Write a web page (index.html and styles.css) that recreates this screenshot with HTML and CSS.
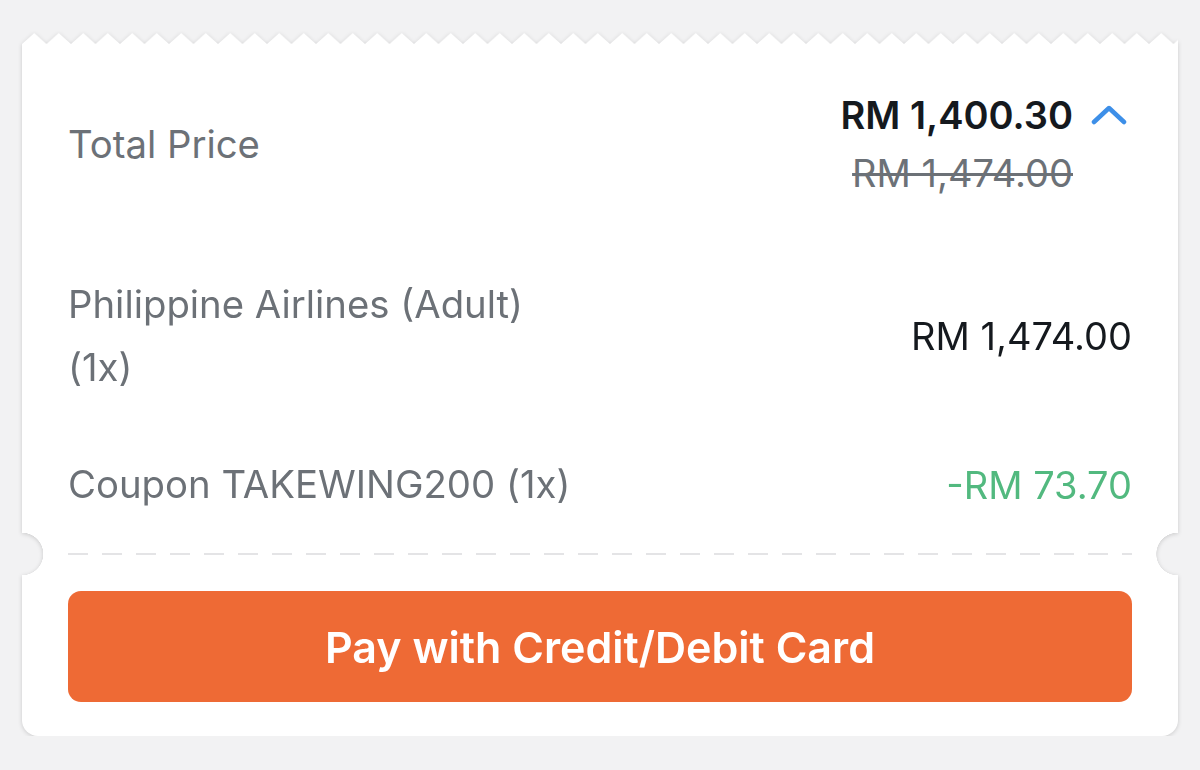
FILE: index.html
```html
<!DOCTYPE html>
<html>
<head>
    <title>Payment Summary</title>
    <link rel="stylesheet" href="styles.css">
</head>
<body>
    <div class="ticket">
        <svg class="teeth" width="100%" height="11">
            <defs>
                <pattern id="tooth" width="24.5" height="11" patternUnits="userSpaceOnUse">
                    <path d="M0 11 L12.25 0 L24.5 11 Z" fill="#fff"/>
                </pattern>
            </defs>
            <rect width="100%" height="11" fill="url(#tooth)"/>
        </svg>

        <div class="summary">
            <div class="row total">
                <span class="label">Total Price</span>
                <div class="total-right">
                    <div class="prices">
                        <div class="price-now">RM 1,400.30</div>
                        <div class="price-old">RM 1,474.00</div>
                    </div>
                    <svg class="chevron" width="36" height="20" viewBox="0 0 36 20">
                        <path d="M3 17 L18 3 L33 17" fill="none" stroke="#3d8fe8" stroke-width="4.5" stroke-linecap="round" stroke-linejoin="round"/>
                    </svg>
                </div>
            </div>

            <div class="row item">
                <span class="label">Philippine Airlines (Adult)<br>(1x)</span>
                <span class="amount">RM 1,474.00</span>
            </div>

            <div class="row coupon">
                <span class="label">Coupon TAKEWING200 (1x)</span>
                <span class="amount discount">-RM 73.70</span>
            </div>
        </div>

        <div class="divider"><div class="dash"></div></div>

        <div class="actions">
            <button class="pay-btn">Pay with Credit/Debit Card</button>
        </div>
    </div>
</body>
</html>
```

FILE: styles.css
```css
body { margin: 0; background: #f2f2f3; font-family: Inter, "Noto Sans", sans-serif; }
.ticket { margin: 33px 22px 0; filter: drop-shadow(0 1px 2px rgba(0,0,0,0.16)); }
.teeth { display: block; }

.summary { background: #fff; padding: 42px 46px 17px; }
.row { display: flex; justify-content: space-between; align-items: center; }
.label { font-size: 38.3px; line-height: 63px; color: #6c7177; }
.amount { font-size: 38px; color: #15191e; }
.discount { color: #52b97f; }

.total-right { display: flex; align-items: flex-start; }
.prices { text-align: right; }
.price-now { font-size: 38px; line-height: 58px; font-weight: 600; color: #15191e; }
.price-old { font-size: 38px; line-height: 58px; color: #6c7177; text-decoration: line-through; text-decoration-thickness: 3px; }
.chevron { margin: 19px 5px 0 18px; }

.item { margin-top: 71px; }
.coupon { margin-top: 54px; }

.divider {
    height: 42px;
    padding: 0 46px;
    display: flex;
    align-items: center;
    background:
        radial-gradient(circle at left center, transparent 21px, #fff 21.5px) left / 51% 100% no-repeat,
        radial-gradient(circle at right center, transparent 21px, #fff 21.5px) right / 51% 100% no-repeat;
}
.dash { flex: 1; height: 2px; background: repeating-linear-gradient(90deg, #e4e4e6 0 20px, transparent 20px 34px); }

.actions { background: #fff; padding: 16px 46px 34px; border-radius: 0 0 16px 16px; }
.pay-btn {
    display: block;
    width: 100%;
    height: 111px;
    border: none;
    border-radius: 13px;
    background: #ee6a35;
    color: #fff;
    font-family: Inter, "Noto Sans", sans-serif;
    font-size: 43px;
    font-weight: 600;
}
```
